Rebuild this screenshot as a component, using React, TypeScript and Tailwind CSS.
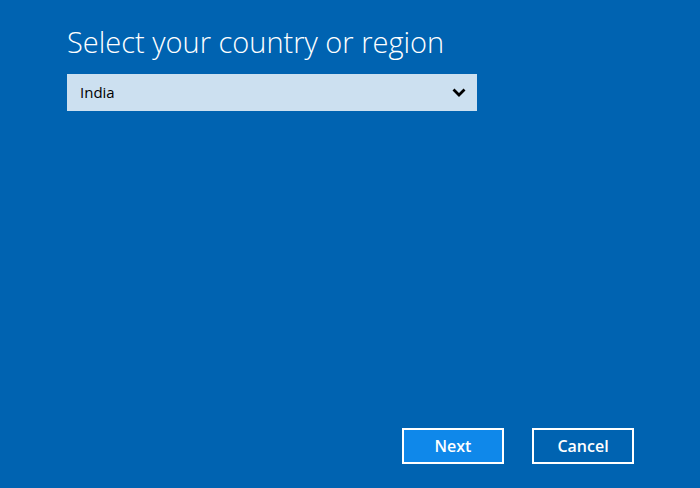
export default function App() {
  return (
    <div
      className="flex h-[488px] w-[700px] flex-col bg-[#0063b1] text-white"
      style={{ fontFamily: '"Open Sans", "Noto Sans", sans-serif' }}
    >
      <div className="pl-[67px] pt-[23px]">
        <h1 className="text-[29px] font-light leading-[38px]">Select your country or region</h1>
        <div className="mt-[13px] flex h-[37px] w-[410px] items-center justify-between bg-[#cce0f0] pl-[13px] pr-[11px] text-[15px] text-black">
          <span>India</span>
          <svg width="14" height="9" viewBox="0 0 14 9" fill="none">
            <path d="M1.5 1.5 L7 7 L12.5 1.5" stroke="#000" strokeWidth="2.8" />
          </svg>
        </div>
      </div>
      <div className="mt-auto flex justify-end gap-[28px] pb-[24px] pr-[66px]">
        <button className="h-[36px] w-[102px] border-2 border-white bg-[#0f88ea] text-[16px] font-semibold">Next</button>
        <button className="h-[36px] w-[102px] border-2 border-white bg-[#0063b1] text-[16px] font-semibold">Cancel</button>
      </div>
    </div>
  );
}
